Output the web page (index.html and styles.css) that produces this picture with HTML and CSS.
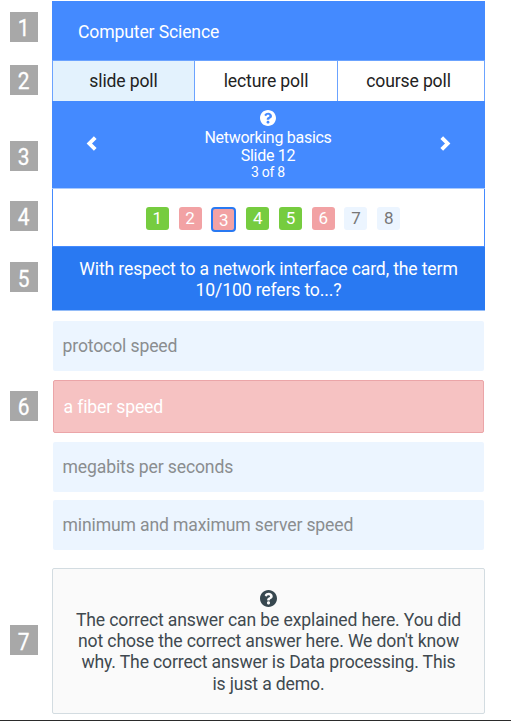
FILE: index.html
```html
<!DOCTYPE html>
<html lang="en">
<head>
<meta charset="utf-8">
<title>Computer Science</title>
<link rel="stylesheet" href="styles.css">
</head>
<body>
<div class="page">
  <aside class="markers">
    <div class="marker m1"><span>1</span></div>
    <div class="marker m2"><span>2</span></div>
    <div class="marker m3"><span>3</span></div>
    <div class="marker m4"><span>4</span></div>
    <div class="marker m5"><span>5</span></div>
    <div class="marker m6"><span>6</span></div>
    <div class="marker m7"><span>7</span></div>
  </aside>
  <main class="poll">
    <header class="title">Computer Science</header>
    <nav class="tabs">
      <div class="tab active"><span>slide poll</span></div>
      <div class="tab"><span>lecture poll</span></div>
      <div class="tab"><span>course poll</span></div>
    </nav>
    <section class="slide">
      <svg class="arrow" viewBox="0 0 10 14"><path d="M8.500 1.500 3 7l5.500 5.500"/></svg>
      <div class="slide-info">
        <svg class="help" viewBox="8 8 496 496"><path d="M504 256c0 136.997-111.043 248-248 248S8 392.997 8 256C8 119.083 119.043 8 256 8s248 111.083 248 248zM262.655 90c-54.497 0-89.255 22.957-116.549 63.758-3.536 5.286-2.353 12.415 2.715 16.258l34.699 26.31c5.205 3.947 12.621 3.008 16.665-2.122 17.864-22.658 30.113-35.797 57.303-35.797 20.429 0 45.698 13.148 45.698 32.958 0 14.976-12.363 22.667-32.534 33.976C247.128 238.528 216 254.941 216 296v4c0 6.627 5.373 12 12 12h56c6.627 0 12-5.373 12-12v-1.333c0-28.462 83.186-29.647 83.186-106.667 0-58.002-60.165-102-116.531-102zM256 338c-25.365 0-46 20.635-46 46 0 25.364 20.635 46 46 46s46-20.636 46-46c0-25.365-20.635-46-46-46z"/></svg>
        <div class="topic">Networking basics</div>
        <div class="topic">Slide 12</div>
        <div class="count">3 of 8</div>
      </div>
      <svg class="arrow" viewBox="0 0 10 14"><path d="M1.500 1.500 7 7l-5.500 5.500"/></svg>
    </section>
    <section class="steps">
      <span class="step right">1</span>
      <span class="step wrong">2</span>
      <span class="step wrong current">3</span>
      <span class="step right">4</span>
      <span class="step right">5</span>
      <span class="step wrong">6</span>
      <span class="step">7</span>
      <span class="step">8</span>
    </section>
    <h1 class="question">With respect to a network interface card, the term<br>10/100 refers to...?</h1>
    <div class="answers">
      <div class="answer"><span>protocol speed</span></div>
      <div class="answer selected"><span>a fiber speed</span></div>
      <div class="answer"><span>megabits per seconds</span></div>
      <div class="answer"><span>minimum and maximum server speed</span></div>
    </div>
    <section class="explanation">
      <svg class="help" viewBox="8 8 496 496"><path d="M504 256c0 136.997-111.043 248-248 248S8 392.997 8 256C8 119.083 119.043 8 256 8s248 111.083 248 248zM262.655 90c-54.497 0-89.255 22.957-116.549 63.758-3.536 5.286-2.353 12.415 2.715 16.258l34.699 26.31c5.205 3.947 12.621 3.008 16.665-2.122 17.864-22.658 30.113-35.797 57.303-35.797 20.429 0 45.698 13.148 45.698 32.958 0 14.976-12.363 22.667-32.534 33.976C247.128 238.528 216 254.941 216 296v4c0 6.627 5.373 12 12 12h56c6.627 0 12-5.373 12-12v-1.333c0-28.462 83.186-29.647 83.186-106.667 0-58.002-60.165-102-116.531-102zM256 338c-25.365 0-46 20.635-46 46 0 25.364 20.635 46 46 46s46-20.636 46-46c0-25.365-20.635-46-46-46z"/></svg>
      <p>The correct answer can be explained here. You did<br>not chose the correct answer here. We don't know<br>why. The correct answer is Data processing. This<br>is just a demo.</p>
    </section>
  </main>
</div>
</body>
</html>
```

FILE: styles.css
```css
* { box-sizing: border-box; }

body {
  margin: 0;
  background: #fff;
  font-family: Roboto, "Liberation Sans", sans-serif;
  font-size: 17.6px;
  letter-spacing: -.14px;
}

.page {
  display: flex;
  gap: 14px;
  height: 721px;
  padding: 1px 26px 0 10px;
  border-bottom: 1px solid #2b2b2b;
}

/* numbered callouts */
.markers { width: 28px; }
.marker {
  display: flex;
  align-items: center;
  justify-content: center;
  height: 30px;
  padding: 1px 1px 0 0;
  background: #a8a8a8;
  color: #fff;
  font-size: 24px;
  line-height: 30px;
}
.marker span { transform: scaleX(.87); -webkit-text-stroke: .3px #fff; }
.m1 { margin-top: 11px; }
.m2 { margin-top: 23px; }
.m3 { margin-top: 46px; }
.m4 { margin-top: 30px; }
.m5 { margin-top: 31px; padding-top: 3px; }
.m6 { margin-top: 99px; }
.m7 { margin-top: 204px; padding-top: 3px; }

.poll { width: 433px; }

.title {
  height: 59px;
  padding: 3px 26px 0;
  background: #448aff;
  color: #fff;
  line-height: 57px;
}

.tabs {
  display: grid;
  grid-template-columns: 141px 142px 1fr;
  gap: 1px;
  height: 41px;
  padding: 1px 1px 0;
  background: #6ba3ff;
}
.tab {
  height: 40px;
  background: #fff;
  color: #222;
  line-height: 41px;
  text-align: center;
}
.tab.active { background: #e3f2fd; }
.tab:last-child { padding-right: 5px; }

.slide {
  display: flex;
  justify-content: space-between;
  height: 88px;
  padding: 9px 34px 0;
  background: #448aff;
  border-bottom: 1px solid #a9caff;
  color: #fff;
}
.arrow {
  width: 11px;
  height: 15px;
  margin-top: 26px;
  fill: none;
  stroke: #fff;
  stroke-width: 3.6;
}
.slide-info {
  display: flex;
  flex-direction: column;
  align-items: center;
  padding-right: 1px;
  font-size: 16px;
  letter-spacing: -.28px;
}
.help {
  display: block;
  width: 16px;
  height: 16px;
  fill: currentColor;
}
.topic { line-height: 18px; }
.slide-info .help { margin-bottom: 3px; }
.count { font-size: 14px; line-height: 15px; }

.steps {
  display: flex;
  justify-content: center;
  gap: 9.8px;
  height: 57px;
  padding: 18px 0 0 9px;
  border: solid #448aff;
  border-width: 0 1px;
  background: #fff;
}
.step {
  width: 23px;
  height: 23px;
  border-radius: 3px;
  background: #ecf5ff;
  color: #777;
  font-size: 17px;
  line-height: 22px;
  text-align: center;
}
.step.right { background: #76cc3f; color: #fff; }
.step.wrong { background: #f2a2a4; color: #fff; }
.step.current {
  width: 25px;
  height: 25px;
  border: 2px solid #2979f2;
  border-radius: 4px;
}

.question {
  height: 65px;
  margin: 0;
  padding-top: 12px;
  border-top: 1px solid #448aff;
  border-bottom: 1px solid #94bcf8;
  background: #2979f2;
  color: #fff;
  font-size: 17.6px;
  font-weight: 400;
  line-height: 21px;
  text-align: center;
}

.answers { padding: 10px 1px 0; }
.answer {
  height: 50px;
  margin-bottom: 8px;
  padding-left: 9.500px;
  border-radius: 2px;
  background: #ecf5ff;
  color: #8a8d8f;
  line-height: 50px;
}
.answer.selected {
  height: 53px;
  margin: 9px 0;
  border: 1px solid #eba5a8;
  background: #f6c2c2;
  color: #fff;
  line-height: 52px;
}

.explanation {
  display: flex;
  flex-direction: column;
  align-items: center;
  height: 146px;
  margin-top: 18px;
  padding-top: 21px;
  border: 1px solid #d3dce1;
  border-radius: 2px;
  background: #fafafa;
  color: #40494f;
}
.explanation .help { width: 17px; height: 17px; color: #37474f; }
.explanation p {
  margin: 3px 0 0;
  line-height: 21.2px;
  text-align: center;
}
```
